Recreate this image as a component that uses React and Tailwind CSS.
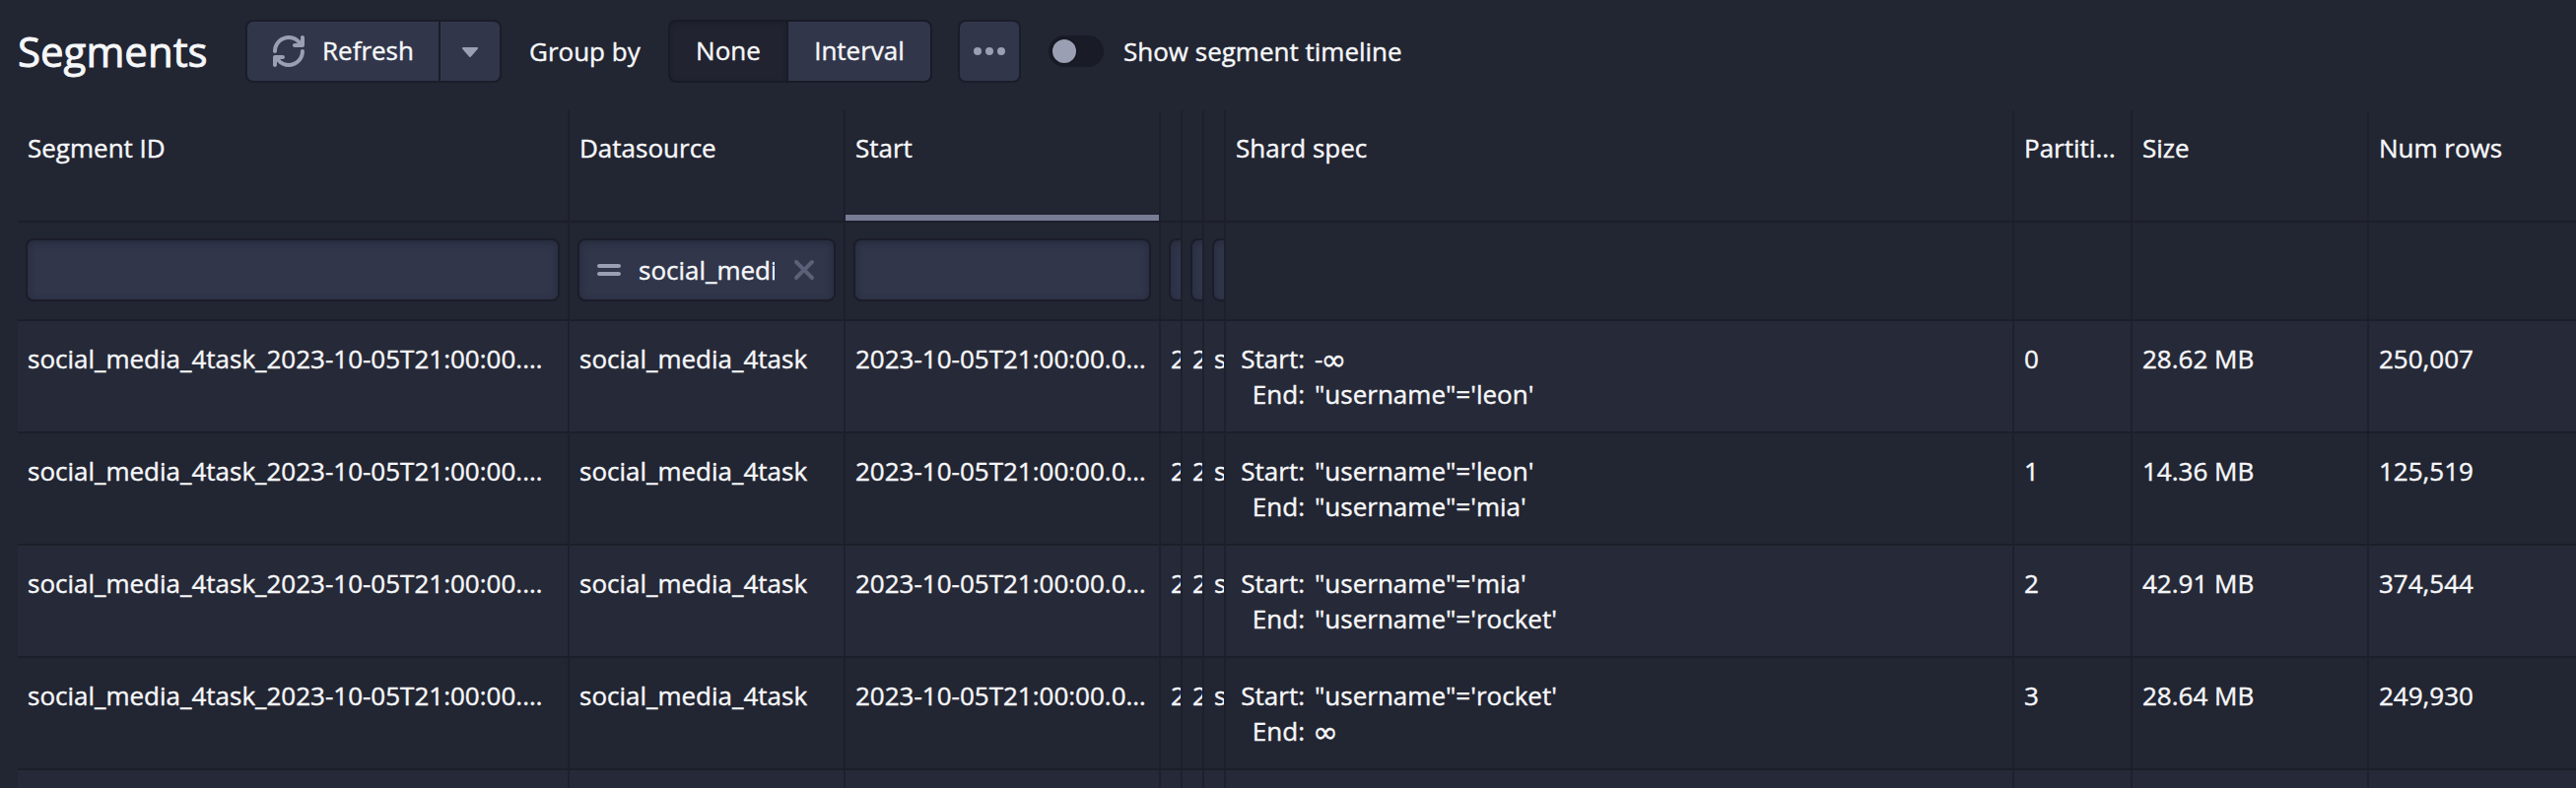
import React from "react";

const REFRESH =
  "M14.99 6.99c-.55 0-1 .45-1 1 0 3.31-2.69 6-6 6-1.77 0-3.36-.78-4.46-2h1.46c.55 0 1-.45 1-1s-.45-1-1-1h-4c-.55 0-1 .45-1 1v4c0 .55.45 1 1 1s1-.45 1-1v-1.74a7.95 7.95 0 006 2.74c4.42 0 8-3.58 8-8 0-.55-.45-1-1-1zm0-7c-.55 0-1 .45-1 1v1.74a7.95 7.95 0 00-6-2.74c-4.42 0-8 3.58-8 8 0 .55.45 1 1 1s1-.45 1-1c0-3.31 2.69-6 6-6 1.77 0 3.36.78 4.46 2h-1.46c-.55 0-1 .45-1 1s.45 1 1 1h4c.55 0 1-.45 1-1v-4c0-.55-.45-1-1-1z";
const CARET =
  "M12 6.5c0-.28-.22-.5-.5-.5h-7a.495.495 0 00-.37.83l3.5 4c.09.1.22.17.37.17s.28-.07.37-.17l3.5-4c.08-.09.13-.2.13-.33z";
const MORE =
  "M2 6a2 2 0 100 4 2 2 0 100-4zM14 6a2 2 0 100 4 2 2 0 100-4zM8 6a2 2 0 100 4 2 2 0 100-4z";
const EQUALS =
  "M13 9H3c-.55 0-1 .45-1 1s.45 1 1 1h10c.55 0 1-.45 1-1s-.45-1-1-1zM3 7h10c.55 0 1-.45 1-1s-.45-1-1-1H3c-.55 0-1 .45-1 1s.45 1 1 1z";
const CROSS =
  "M9.41 8l3.29-3.29c.19-.18.3-.43.3-.71a1.003 1.003 0 00-1.71-.71L8 6.59l-3.29-3.3a1.003 1.003 0 00-1.42 1.42L6.59 8 3.3 11.29c-.19.18-.3.43-.3.71a1.003 1.003 0 001.71.71L8 9.41l3.29 3.29c.18.19.43.3.71.3a1.003 1.003 0 00.71-1.71L9.41 8z";

function Icon({ d, className = "" }) {
  return (
    <svg viewBox="0 0 16 16" className={`size-8 shrink-0 fill-current ${className}`}>
      <path fillRule="evenodd" d={d} />
    </svg>
  );
}

const COLUMNS =
  "grid grid-cols-[560px_280px_320px_22px_22px_22px_800px_120px_240px_240px]";

const headers = ["Segment ID", "Datasource", "Start", "", "", "", "Shard spec", "Partition", "Size", "Num rows"];

const rows = [
  { start: "-∞", end: "\"username\"='leon'", partition: "0", size: "28.62 MB", count: "250,007" },
  { start: "\"username\"='leon'", end: "\"username\"='mia'", partition: "1", size: "14.36 MB", count: "125,519" },
  { start: "\"username\"='mia'", end: "\"username\"='rocket'", partition: "2", size: "42.91 MB", count: "374,544" },
  { start: "\"username\"='rocket'", end: "∞", partition: "3", size: "28.64 MB", count: "249,930" },
];

function Cell({ children, className = "" }) {
  return (
    <div className={`min-w-0 overflow-hidden border-r-2 border-[#1d1f2b]/80 px-2.5 whitespace-nowrap ${className}`}>
      {children}
    </div>
  );
}

function TextCell({ children, className = "" }) {
  return (
    <Cell className="pt-5">
      <div className={`truncate ${className}`}>{children}</div>
    </Cell>
  );
}

function ClippedCell({ children }) {
  return (
    <Cell className="pt-5 pr-0">
      <div className="overflow-hidden text-clip">{children}</div>
    </Cell>
  );
}

function Bound({ children }) {
  if (!children.endsWith("∞")) return <span>{children}</span>;
  return (
    <span className="flex h-9">
      {children.slice(0, -1)}
      <span className="-ml-0.5 font-['DejaVu_Sans',sans-serif] text-[31px] leading-[38px] [-webkit-text-stroke:0.4px_#f6f7f9]">∞</span>
    </span>
  );
}

function FilterInput({ narrow, children }) {
  return (
    <div
      className={`flex h-[60px] items-center rounded-md bg-[#31364b] shadow-[0_0_0_2px_#1b1d29,inset_0_2px_8px_rgba(20,22,34,0.4)] ${narrow ? "w-10" : "w-full"}`}
    >
      {children}
    </div>
  );
}

function SegmentRow({ row, odd }) {
  return (
    <div className={`${COLUMNS} h-[114px] border-b-2 border-[#1c1e2a] ${odd ? "bg-[#262937]" : ""}`}>
      <TextCell className="w-[532px]">social_media_4task_2023-10-05T21:00:00.000Z</TextCell>
      <TextCell>social_media_4task</TextCell>
      <TextCell>2023-10-05T21:00:00.000Z</TextCell>
      <ClippedCell>2</ClippedCell>
      <ClippedCell>2</ClippedCell>
      <ClippedCell>s</ClippedCell>
      <Cell className="pt-5">
        <div className="grid grid-cols-[70px_auto] justify-start gap-x-2.5">
          <span className="text-right">Start:</span>
          <Bound>{row.start}</Bound>
          <span className="text-right">End:</span>
          <Bound>{row.end}</Bound>
        </div>
      </Cell>
      <TextCell>{row.partition}</TextCell>
      <TextCell>{row.size}</TextCell>
      <TextCell>{row.count}</TextCell>
    </div>
  );
}

export default function App() {
  return (
    <div className="flex h-[800px] w-[2614px] flex-col overflow-hidden bg-[#222532] font-['Open_Sans','Noto_Sans',sans-serif] text-[26px] leading-9 text-[#f6f7f9] [-webkit-text-stroke:0.4px_#f6f7f9]">
      <header className="flex h-[112px] shrink-0 items-start pt-[22px] pl-[18px]">
        <h1 className="flex h-[60px] w-[233px] items-center text-[42px] leading-[60px] [-webkit-text-stroke:0.9px_#f6f7f9]">
          Segments
        </h1>
        <div className="flex h-[60px] gap-0.5 overflow-hidden rounded-md bg-[#1b1d29] shadow-[0_0_0_2px_#1b1d29]">
          <button className="flex w-[194px] items-center gap-[18px] bg-[#31364b] pb-0.5 pl-[26px]">
            <Icon d={REFRESH} className="relative top-px text-[#9a9fb4]" />
            Refresh
          </button>
          <button className="flex w-[60px] items-center justify-center bg-[#31364b] text-[#9a9fb4]">
            <Icon d={CARET} />
          </button>
        </div>
        <span className="ml-[30px] flex h-[60px] w-[143px] items-center">Group by</span>
        <div className="flex h-[60px] gap-0.5 overflow-hidden rounded-md bg-[#191b27] shadow-[0_0_0_2px_#191b27]">
          <button className="w-[118px] rounded-l-md bg-[#212330] pb-0.5 shadow-[inset_0_2px_4px_rgba(17,19,30,0.25)]">None</button>
          <button className="w-36 bg-[#31364b] pb-0.5">Interval</button>
        </div>
        <button className="ml-[30px] flex size-[60px] items-center justify-center rounded-md bg-[#31364b] text-[#9a9fb4] shadow-[0_0_0_2px_#1b1d29]">
          <Icon d={MORE} />
        </button>
        <label className="ml-[30px] flex h-[60px] items-center gap-5">
          <span className="flex h-8 w-14 items-center rounded-full bg-[#191c27] px-1">
            <span className="size-6 rounded-full bg-[#9a9fb4] shadow-[0_0_0_2px_rgba(17,19,30,0.4)]" />
          </span>
          Show segment timeline
        </label>
      </header>

      <main className="ml-[18px] w-[2626px]">
        <div className={`${COLUMNS} h-[114px] border-b-2 border-[#1c1e2a]`}>
          {headers.map((title, i) => (
            <Cell key={i} className={title === "Start" ? "pt-5 shadow-[inset_0_-6px_0_#787d95]" : "pt-5"}>
              <div className="truncate">{title}</div>
            </Cell>
          ))}
        </div>

        <div className={`${COLUMNS} h-[100px] border-b-2 border-[#1c1e2a]`}>
          <Cell className="pt-[18px]"><FilterInput /></Cell>
          <Cell className="pt-[18px]">
            <FilterInput>
              <Icon d={EQUALS} className="ml-3.5 text-[#9a9fb4]" />
              <span className="mr-px ml-3.5 w-[138px] overflow-hidden">social_media_4task</span>
              <Icon d={CROSS} className="ml-[13px] text-[#5c6178]" />
            </FilterInput>
          </Cell>
          <Cell className="pt-[18px]"><FilterInput /></Cell>
          <Cell className="pt-[18px]"><FilterInput narrow /></Cell>
          <Cell className="pt-[18px]"><FilterInput narrow /></Cell>
          <Cell className="pt-[18px]"><FilterInput narrow /></Cell>
          <Cell />
          <Cell />
          <Cell />
          <Cell />
        </div>

        {rows.map((row, i) => (
          <SegmentRow key={row.partition} row={row} odd={i % 2 === 0} />
        ))}
        <div className={`${COLUMNS} h-[18px] bg-[#262937]`}>
          {headers.map((_, i) => (
            <Cell key={i} />
          ))}
        </div>
      </main>
    </div>
  );
}
